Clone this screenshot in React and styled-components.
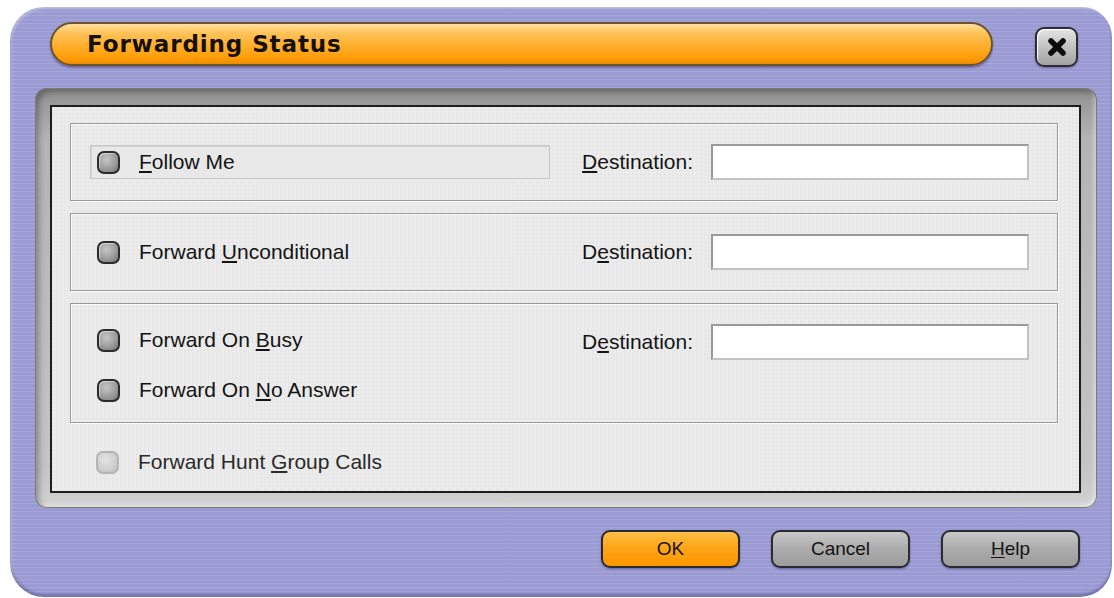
import React, { useState } from 'react';
import styled, { createGlobalStyle, css } from 'styled-components';

const GlobalStyle = createGlobalStyle`
  html, body {
    margin: 0;
    padding: 0;
    background: #fff;
  }
  body {
    font-family: 'Liberation Sans', Arial, sans-serif;
  }
`;

const Window = styled.div`
  box-sizing: border-box;
  width: 1102px;
  height: 590px;
  margin: 7px 0 0 10px;
  border-radius: 34px 30px 32px 34px;
  background-color: #9d9dd6;
  background-image: repeating-linear-gradient(
    180deg,
    rgba(255, 255, 255, 0.1) 0px,
    rgba(255, 255, 255, 0.1) 1px,
    rgba(0, 0, 0, 0) 1px,
    rgba(0, 0, 0, 0) 3px,
    rgba(40, 40, 110, 0.06) 3px,
    rgba(40, 40, 110, 0.06) 4px
  );
  box-shadow: inset 0 -3px 3px rgba(60, 60, 120, 0.45),
    inset 2px 2px 2px rgba(255, 255, 255, 0.25);
  display: flex;
  flex-direction: column;
`;

const Header = styled.div`
  display: flex;
  align-items: flex-start;
  padding: 15px 0 0 40px;
  height: 66px;
  box-sizing: border-box;
`;

const TitlePill = styled.div`
  box-sizing: border-box;
  width: 943px;
  height: 44px;
  border-radius: 22px;
  border: 2px solid #6b5330;
  background: linear-gradient(
    180deg,
    #ffe0a0 0%,
    #ffc35a 22%,
    #ffae2c 55%,
    #ff9c08 85%,
    #f08c00 100%
  );
  box-shadow: 0 2px 2px rgba(50, 40, 90, 0.45);
  display: flex;
  align-items: center;
  padding-left: 35px;
`;

const Title = styled.h1`
  margin: 0;
  font-family: 'DejaVu Sans', Verdana, sans-serif;
  font-size: 23px;
  font-weight: bold;
  color: #141008;
  letter-spacing: 0.9px;
`;

const CloseButton = styled.button`
  box-sizing: border-box;
  margin: 5px 0 0 42px;
  width: 43px;
  height: 40px;
  border-radius: 9px;
  border: 2px solid #2d2d33;
  background: linear-gradient(180deg, #e4e4e4 0%, #c2c2c2 50%, #a2a2a2 100%);
  box-shadow: inset 1px 1px 1px #fff, 0 1px 2px rgba(40, 40, 90, 0.5);
  display: flex;
  align-items: center;
  justify-content: center;
  padding: 0;
`;

const Bevel = styled.div`
  box-sizing: border-box;
  margin: 15px 0 0 25px;
  width: 1062px;
  height: 420px;
  padding: 17px 16px 15px 15px;
  border-radius: 12px;
  background: linear-gradient(180deg, #8f8f8f 0%, #b4b4b4 12%, #c4c4c4 90%, #d2d2d2 100%);
  box-shadow: inset 0 0 0 1px #7a7a7a, inset 4px 4px 6px rgba(0, 0, 0, 0.3),
    inset -3px -3px 4px rgba(255, 255, 255, 0.45);
`;

const Panel = styled.div`
  box-sizing: border-box;
  height: 100%;
  border: 2px solid #1e1e1e;
  background-color: #ececec;
  background-image: repeating-linear-gradient(
      90deg,
      rgba(0, 0, 0, 0.018) 0 1px,
      transparent 1px 4px
    ),
    repeating-linear-gradient(0deg, rgba(0, 0, 0, 0.018) 0 1px, transparent 1px 4px);
  padding: 16px 21px 0 18px;
  display: flex;
  flex-direction: column;
  gap: 12px;
`;

const GroupBox = styled.div`
  box-sizing: border-box;
  height: ${(p) => p.$height}px;
  border: 1px solid #9a9a9a;
  box-shadow: inset 1px 1px 0 #fbfbfb, 1px 1px 0 #fbfbfb;
  display: flex;
  padding: 0 28px 0 19px;
`;

const OptionColumn = styled.div`
  flex: 1;
  display: flex;
  flex-direction: column;
  justify-content: center;
  gap: 16px;
  padding-top: ${(p) => p.$nudge || 0}px;
`;

const OptionRow = styled.label`
  box-sizing: border-box;
  width: 460px;
  height: 34px;
  display: flex;
  align-items: center;
  gap: 19px;
  padding-left: 6px;
  border: 1px solid transparent;
  font-size: 21px;
  color: ${(p) => (p.$disabled ? '#2a2a2a' : '#141414')};
  cursor: default;
  ${(p) =>
    p.$focused &&
    css`
      border-color: #c6c6c6;
      box-shadow: inset 1px 1px 0 #d4d4d4;
      background: #e8e8e8;
    `}
`;

const Led = styled.span`
  box-sizing: border-box;
  flex: none;
  width: 23px;
  height: 23px;
  border-radius: 7px;
  ${(p) =>
    p.$disabled
      ? css`
          border: 2px solid #b4b4b4;
          background: radial-gradient(circle at 40% 35%, #e4e4e4 0%, #cfcfcf 60%, #bdbdbd 100%);
        `
      : css`
          border: 2px solid #2c2c2c;
          background: radial-gradient(circle at 40% 35%, #c6c6c6 0%, #9c9c9c 55%, #727272 100%);
          box-shadow: inset 1px 1px 1px rgba(255, 255, 255, 0.5);
        `}
`;

const DestField = styled.div`
  display: flex;
  align-items: ${(p) => (p.$top ? 'flex-start' : 'center')};
  padding-top: ${(p) => (p.$top ? '20px' : '0')};
  gap: 18px;
`;

const FieldLabel = styled.span`
  font-size: 21px;
  color: #141414;
  line-height: 36px;
`;

const Input = styled.input`
  box-sizing: border-box;
  width: 318px;
  height: 36px;
  border: 2px solid #9a9a9a;
  border-right-color: #c2c2c2;
  border-bottom-color: #c2c2c2;
  background: #fff;
  font-family: 'Liberation Sans', Arial, sans-serif;
  font-size: 18px;
  outline: none;
`;

const HuntRow = styled.div`
  padding: 10px 0 0 19px;
`;

const Footer = styled.div`
  display: flex;
  justify-content: flex-end;
  gap: 31px;
  padding: 22px 32px 0 0;
`;

const DialogButton = styled.button`
  box-sizing: border-box;
  width: 139px;
  height: 38px;
  border-radius: 9px;
  border: 2px solid #2a2a30;
  font-family: 'Liberation Sans', Arial, sans-serif;
  font-size: 19px;
  color: #141414;
  padding: 0;
  box-shadow: 0 1px 2px rgba(40, 40, 100, 0.5);
  background: ${(p) =>
    p.$primary
      ? 'linear-gradient(180deg, #ffc04a 0%, #ffa516 45%, #fb9700 100%)'
      : 'linear-gradient(180deg, #c8c8c8 0%, #adadad 45%, #9c9c9c 100%)'};
`;

const U = styled.span`
  text-decoration: underline;
  text-underline-offset: 2px;
`;

function Option({ label, focused, disabled }) {
  return (
    <OptionRow $focused={focused} $disabled={disabled}>
      <Led $disabled={disabled} />
      <span>{label}</span>
    </OptionRow>
  );
}

function Destination({ mnemonic, top, value, onChange }) {
  const word = 'Destination:';
  const i = word.indexOf(mnemonic);
  return (
    <DestField $top={top}>
      <FieldLabel>
        {word.slice(0, i)}
        <U>{mnemonic}</U>
        {word.slice(i + 1)}
      </FieldLabel>
      <Input value={value} onChange={onChange} />
    </DestField>
  );
}

export default function App() {
  const [dest, setDest] = useState({ follow: '', always: '', busy: '' });
  const handle = (name) => (e) => setDest({ ...dest, [name]: e.target.value });

  return (
    <>
      <GlobalStyle />
      <Window>
        <Header>
          <TitlePill>
            <Title>Forwarding Status</Title>
          </TitlePill>
          <CloseButton aria-label="Close">
            <svg width="22" height="22" viewBox="0 0 22 22">
              <path
                d="M5 5 L17 17 M17 5 L5 17"
                stroke="#0c0c0c"
                strokeWidth="5.5"
                strokeLinecap="round"
              />
            </svg>
          </CloseButton>
        </Header>

        <Bevel>
          <Panel>
            <GroupBox $height={78}>
              <OptionColumn>
                <Option
                  focused
                  label={
                    <>
                      <U>F</U>ollow Me
                    </>
                  }
                />
              </OptionColumn>
              <Destination mnemonic="D" value={dest.follow} onChange={handle('follow')} />
            </GroupBox>

            <GroupBox $height={78}>
              <OptionColumn>
                <Option
                  label={
                    <>
                      Forward <U>U</U>nconditional
                    </>
                  }
                />
              </OptionColumn>
              <Destination mnemonic="e" value={dest.always} onChange={handle('always')} />
            </GroupBox>

            <GroupBox $height={120}>
              <OptionColumn $nudge={4}>
                <Option
                  label={
                    <>
                      Forward On <U>B</U>usy
                    </>
                  }
                />
                <Option
                  label={
                    <>
                      Forward On <U>N</U>o Answer
                    </>
                  }
                />
              </OptionColumn>
              <Destination top mnemonic="e" value={dest.busy} onChange={handle('busy')} />
            </GroupBox>

            <HuntRow>
              <Option
                disabled
                label={
                  <>
                    Forward Hunt <U>G</U>roup Calls
                  </>
                }
              />
            </HuntRow>
          </Panel>
        </Bevel>

        <Footer>
          <DialogButton $primary>OK</DialogButton>
          <DialogButton>Cancel</DialogButton>
          <DialogButton>
            <U>H</U>elp
          </DialogButton>
        </Footer>
      </Window>
    </>
  );
}
